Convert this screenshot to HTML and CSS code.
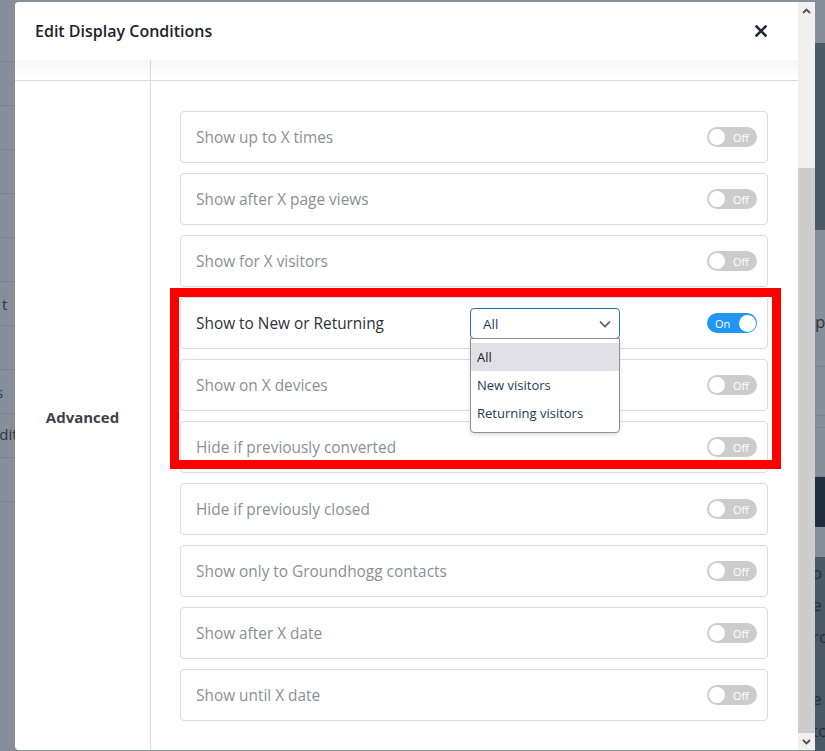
FILE: index.html
```html
<!DOCTYPE html>
<html>
<head>
<meta charset="utf-8">
<title>Edit Display Conditions</title>
<link rel="stylesheet" href="styles.css">
</head>
<body>
<div class="backdrop">
  <div class="bd-left">
    <div class="bd-top"></div>
    <div class="bd-row"></div>
    <div class="bd-row"></div>
    <div class="bd-row"></div>
    <div class="bd-row"></div>
    <div class="bd-row"></div>
    <div class="bd-row"><span class="frag frag-t">t</span></div>
    <div class="bd-row"></div>
    <div class="bd-row"><span class="frag frag-s">s</span></div>
    <div class="bd-row"><span class="frag frag-dit">Edit</span></div>
    <div class="bd-row"></div>
  </div>
  <div class="bd-right">
    <div class="br-gray br-a"></div>
    <div class="br-slate br-b"></div>
    <div class="br-gray br-c"><span class="frag2 pa">pa</span></div>
    <div class="br-gray br-line"></div>
    <div class="br-gray br-line2"></div>
    <div class="br-gray br-line3"></div>
    <div class="br-navy"></div>
    <div class="br-gray br-d"></div>
    <div class="br-slate br-e">
      <span class="frag2">o</span>
      <span class="frag2">e</span>
      <span class="frag2">rc</span>
      <span class="frag2 gap">e</span>
      <span class="frag2">to</span>
    </div>
  </div>
</div>

<div class="modal">
  <div class="modal-main">
    <header class="modal-header">
      <h1 class="modal-title">Edit Display Conditions</h1>
      <button class="close-btn" aria-label="Close">
        <svg width="12" height="12" viewBox="0 0 12 12"><path d="M1.5 1.5L10.5 10.5M10.5 1.5L1.5 10.5" stroke="#1d2939" stroke-width="2.5" stroke-linecap="square"/></svg>
      </button>
    </header>
    <div class="modal-body">
      <div class="trow tail">
        <div class="cell-l"></div>
        <div class="cell-r"></div>
      </div>
      <div class="trow">
        <div class="cell-l"><span class="section-name">Advanced</span></div>
        <div class="cell-r">
          <div class="cond">
            <span class="cond-label">Show up to X times</span>
            <span class="toggle"><span class="knob"></span><span class="tlabel">Off</span></span>
          </div>
          <div class="cond">
            <span class="cond-label">Show after X page views</span>
            <span class="toggle"><span class="knob"></span><span class="tlabel">Off</span></span>
          </div>
          <div class="cond">
            <span class="cond-label">Show for X visitors</span>
            <span class="toggle"><span class="knob"></span><span class="tlabel">Off</span></span>
          </div>
          <div class="cond active">
            <span class="cond-label fixed">Show to New or Returning</span>
            <div class="select-wrap">
              <div class="select">
                <span>All</span>
                <svg width="12" height="8" viewBox="0 0 12 8"><path d="M1 1.5l5 5 5-5" fill="none" stroke="#50575e" stroke-width="1.6"/></svg>
              </div>
              <ul class="dropdown">
                <li class="sel">All</li>
                <li>New visitors</li>
                <li>Returning visitors</li>
              </ul>
            </div>
            <span class="toggle on"><span class="tlabel">On</span><span class="knob"></span></span>
          </div>
          <div class="cond">
            <span class="cond-label">Show on X devices</span>
            <span class="toggle"><span class="knob"></span><span class="tlabel">Off</span></span>
          </div>
          <div class="cond">
            <span class="cond-label">Hide if previously converted</span>
            <span class="toggle"><span class="knob"></span><span class="tlabel">Off</span></span>
          </div>
          <div class="cond">
            <span class="cond-label">Hide if previously closed</span>
            <span class="toggle"><span class="knob"></span><span class="tlabel">Off</span></span>
          </div>
          <div class="cond">
            <span class="cond-label">Show only to Groundhogg contacts</span>
            <span class="toggle"><span class="knob"></span><span class="tlabel">Off</span></span>
          </div>
          <div class="cond">
            <span class="cond-label">Show after X date</span>
            <span class="toggle"><span class="knob"></span><span class="tlabel">Off</span></span>
          </div>
          <div class="cond">
            <span class="cond-label">Show until X date</span>
            <span class="toggle"><span class="knob"></span><span class="tlabel">Off</span></span>
          </div>
        </div>
      </div>
    </div>
  </div>
  <div class="scrollbar">
    <div class="sb-btn">
      <svg width="9" height="6" viewBox="0 0 9 6"><path d="M1 5l3.5-3.5L8 5" fill="none" stroke="#505050" stroke-width="1.8"/></svg>
    </div>
    <div class="sb-space"></div>
    <div class="sb-thumb"></div>
    <div class="sb-btn bottom">
      <svg width="9" height="6" viewBox="0 0 9 6"><path d="M1 1l3.5 3.5L8 1" fill="none" stroke="#505050" stroke-width="1.8"/></svg>
    </div>
  </div>
</div>

<div class="highlight"></div>
</body>
</html>
```

FILE: styles.css
```css
* { box-sizing: border-box; }
html, body { margin: 0; padding: 0; }
body {
  width: 825px;
  height: 751px;
  overflow: hidden;
  font-family: "Open Sans", "Noto Sans", sans-serif;
  background: #868f99;
  position: relative;
}

/* backdrop */
.backdrop {
  position: absolute;
  inset: 0;
  display: flex;
  justify-content: space-between;
}
.bd-left { width: 15px; display: flex; flex-direction: column; }
.bd-top { height: 62px; border-bottom: 1px solid #7a838d; flex: none; }
.bd-row {
  height: 44px;
  border-bottom: 1px solid #7a838d;
  flex: none;
  display: flex;
  align-items: center;
  white-space: nowrap;
  overflow: visible;
}
.frag { font-size: 15px; color: #30373e; }
.frag-t { margin-left: 2px; }
.frag-s { margin-left: -4px; }
.frag-dit { margin-left: -9px; margin-top: -4px; }

.bd-right { width: 10px; display: flex; flex-direction: column; }
.br-gray { background: #868f99; }
.br-slate { background: #4b5967; }
.br-a { height: 43px; }
.br-b { height: 187px; }
.br-c {
  height: 137px;
  border-bottom: 1px solid #7a838d;
  display: flex;
  align-items: center;
  padding-top: 48px;
  overflow: visible;
}
.br-line { height: 49px; border-bottom: 1px solid #7a838d; }
.br-line2 { height: 12px; border-bottom: 1px solid #7a838d; }
.br-line3 { height: 49px; border-bottom: 1px solid #7a838d; }
.br-navy { height: 50px; background: #1f2d3f; }
.br-d { height: 30px; }
.br-e { flex: 1; display: flex; flex-direction: column; overflow: visible; }
.frag2 { font-size: 17px; line-height: 32px; color: #27323c; margin-left: -3px; white-space: nowrap; }
.frag2.gap { margin-top: 30px; }
.pa { color: #30373e; margin-left: 0; }

/* modal */
.modal {
  position: absolute;
  left: 15px;
  top: 2px;
  width: 800px;
  height: 748px;
  display: flex;
  background: #fff;
  border-radius: 4px 0 0 4px;
  overflow: hidden;
}
.modal-main {
  width: 783px;
  display: flex;
  flex-direction: column;
  position: relative;
}
.modal-header {
  height: 58px;
  flex: none;
  display: flex;
  align-items: center;
  justify-content: space-between;
  padding: 0 31px 0 20px;
  background: #fff;
  position: relative;
  z-index: 2;
}
.modal-header::after {
  content: "";
  position: absolute;
  left: 0; right: 0; top: 100%;
  height: 20px;
  background: linear-gradient(rgba(0,0,0,0.035), rgba(0,0,0,0));
}
.modal-title {
  margin: 0;
  font-size: 16px;
  font-weight: 600;
  color: #1d2327;
}
.close-btn {
  border: 0;
  background: none;
  padding: 0;
  width: 12px;
  height: 12px;
  display: flex;
}

.modal-body { flex: 1; overflow: hidden; }
.trow { display: flex; }
.trow.tail { height: 21px; border-bottom: 1px solid #dcdcde; }
.cell-l {
  width: 136px;
  flex: none;
  border-right: 1px solid #dcdcde;
  display: flex;
  align-items: center;
  justify-content: center;
}
.cell-r {
  flex: 1;
  padding: 30px 30px 30px 29px;
  display: flex;
  flex-direction: column;
  gap: 10px;
}
.trow.tail .cell-r { padding: 0; }
.section-name {
  font-size: 15px;
  font-weight: 700;
  color: #3c434a;
  padding-top: 2px;
}

.cond {
  height: 52px;
  border: 1px solid #dcdcde;
  border-radius: 4px;
  display: flex;
  align-items: center;
  padding: 0 10px 0 15px;
}
.cond-label {
  flex: 1;
  font-size: 15.4px;
  color: #8a8f94;
  padding-top: 1px;
}
.cond.active .cond-label { color: #2c3338; }
.cond-label.fixed { flex: none; width: 274px; }

.select-wrap { position: relative; flex: none; width: 150px; margin-right: auto; }
.select {
  height: 31px;
  border: 1px solid #2271b1;
  border-radius: 4px;
  display: flex;
  align-items: center;
  justify-content: space-between;
  padding: 1px 8px 0 12px;
  font-size: 13.5px;
  color: #1f3f66;
}
.dropdown {
  position: absolute;
  left: 0;
  top: 30px;
  width: 150px;
  margin: 0;
  padding: 4px 0 5px;
  list-style: none;
  background: #fff;
  border: 1px solid #8f8f8f;
  border-radius: 0 0 4px 4px;
  box-shadow: 0 2px 4px rgba(0,0,0,0.12);
  z-index: 3;
}
.dropdown li {
  height: 28px;
  display: flex;
  align-items: center;
  padding: 1px 0 0 6px;
  font-size: 13px;
  color: #1e3a5a;
}
.dropdown li.sel { background: #e0e0e6; color: #1a1a2a; }

.toggle {
  flex: none;
  width: 50px;
  height: 20px;
  border-radius: 10px;
  background: #cccccc;
  display: flex;
  align-items: center;
  justify-content: space-between;
  padding: 0 8px 0 2px;
}
.knob {
  width: 16px;
  height: 16px;
  border-radius: 50%;
  background: #fff;
}
.tlabel {
  font-size: 11px;
  color: #fff;
  line-height: 1;
}
.toggle.on {
  background: #2196f3;
  padding: 0 1px 0 8px;
}
.toggle.on .knob { width: 17px; height: 17px; }

/* scrollbar */
.scrollbar {
  width: 17px;
  flex: none;
  background: #f0f0f0;
  display: flex;
  flex-direction: column;
}
.sb-btn {
  height: 17px;
  flex: none;
  display: flex;
  align-items: center;
  justify-content: center;
}
.sb-btn.bottom { flex: 1; }
.sb-space { height: 149px; flex: none; }
.sb-thumb { height: 565px; flex: none; background: #cdcdcd; }

/* annotation */
.highlight {
  position: absolute;
  left: 170px;
  top: 288px;
  width: 611px;
  height: 181px;
  border: 9px solid #ff0000;
  pointer-events: none;
  z-index: 5;
}
```
